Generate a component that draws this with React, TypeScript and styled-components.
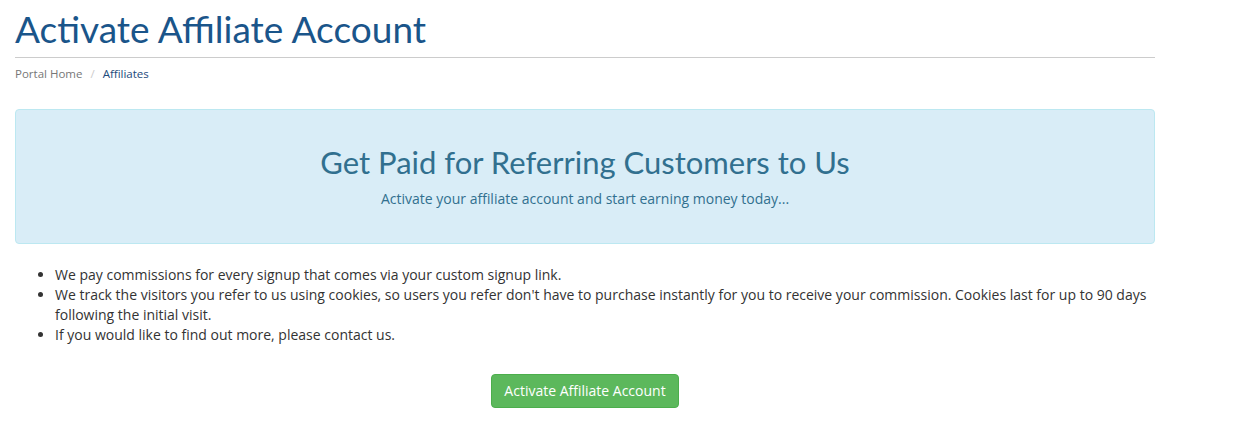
import React from 'react';
import styled, { createGlobalStyle } from 'styled-components';

const GlobalStyle = createGlobalStyle`
    html, body {
        margin: 0;
        padding: 0;
        background: #fff;
    }
    body {
        font-family: "Open Sans", "Liberation Sans", sans-serif;
        font-size: 14px;
        color: #333;
    }
`;

const Page = styled.div`
    width: 1140px;
    padding: 0 15px;
`;

const HeaderLined = styled.div`
    border-bottom: 1px solid #ccc;
    padding-bottom: 7px;

    h1 {
        margin: 0;
        padding-top: 7px;
        font-family: Lato, "Open Sans", sans-serif;
        font-weight: 400;
        font-size: 37px;
        line-height: 43px;
        color: #1a558a;
    }
`;

const Breadcrumb = styled.ol`
    list-style: none;
    margin: 0;
    padding: 8px 0;
    font-size: 11.5px;
    line-height: 16px;
    display: flex;
`;

const Crumb = styled.li<{ $active?: boolean; $sep?: boolean }>`
    color: ${(p) => (p.$active ? '#1d4b7c' : '#777')};

    &::before {
        content: ${(p) => (p.$sep ? "'/'" : 'none')};
        color: #ccc;
        padding: 0 8px 0 8px;
    }
`;

const InfoBox = styled.div`
    margin-top: 19px;
    background: #d9edf7;
    border: 1px solid #bce8f1;
    border-radius: 4px;
    color: #31708f;
    text-align: center;
    padding: 35px 15px 34px;

    h2 {
        margin: 0;
        font-family: Lato, "Open Sans", sans-serif;
        font-weight: 400;
        font-size: 31px;
        line-height: 34px;
    }

    p {
        margin: 10px 0 0;
        font-size: 14px;
        line-height: 20px;
    }
`;

const PerkList = styled.ul`
    margin: 21px 0 0;
    padding-left: 40px;
    font-size: 14px;
    line-height: 20px;
    color: #333;
`;

const Actions = styled.div`
    margin-top: 29px;
    text-align: center;
`;

const Button = styled.button`
    font-family: "Open Sans", "Liberation Sans", sans-serif;
    font-size: 14px;
    line-height: 20px;
    padding: 6px 12px;
    color: #fff;
    background: #5cb85c;
    border: 1px solid #4cae4c;
    border-radius: 4px;
    cursor: pointer;
`;

export default function App() {
    return (
        <Page>
            <GlobalStyle />
            <HeaderLined>
                <h1>Activate Affiliate Account</h1>
            </HeaderLined>
            <Breadcrumb>
                <Crumb>Portal Home</Crumb>
                <Crumb $active $sep>Affiliates</Crumb>
            </Breadcrumb>
            <InfoBox>
                <h2>Get Paid for Referring Customers to Us</h2>
                <p>Activate your affiliate account and start earning money today...</p>
            </InfoBox>
            <PerkList>
                <li>We pay commissions for every signup that comes via your custom signup link.</li>
                <li>
                    We track the visitors you refer to us using cookies, so users you refer don't have to purchase
                    instantly for you to receive your commission. Cookies last for up to 90 days following the initial
                    visit.
                </li>
                <li>If you would like to find out more, please contact us.</li>
            </PerkList>
            <Actions>
                <Button>Activate Affiliate Account</Button>
            </Actions>
        </Page>
    );
}
